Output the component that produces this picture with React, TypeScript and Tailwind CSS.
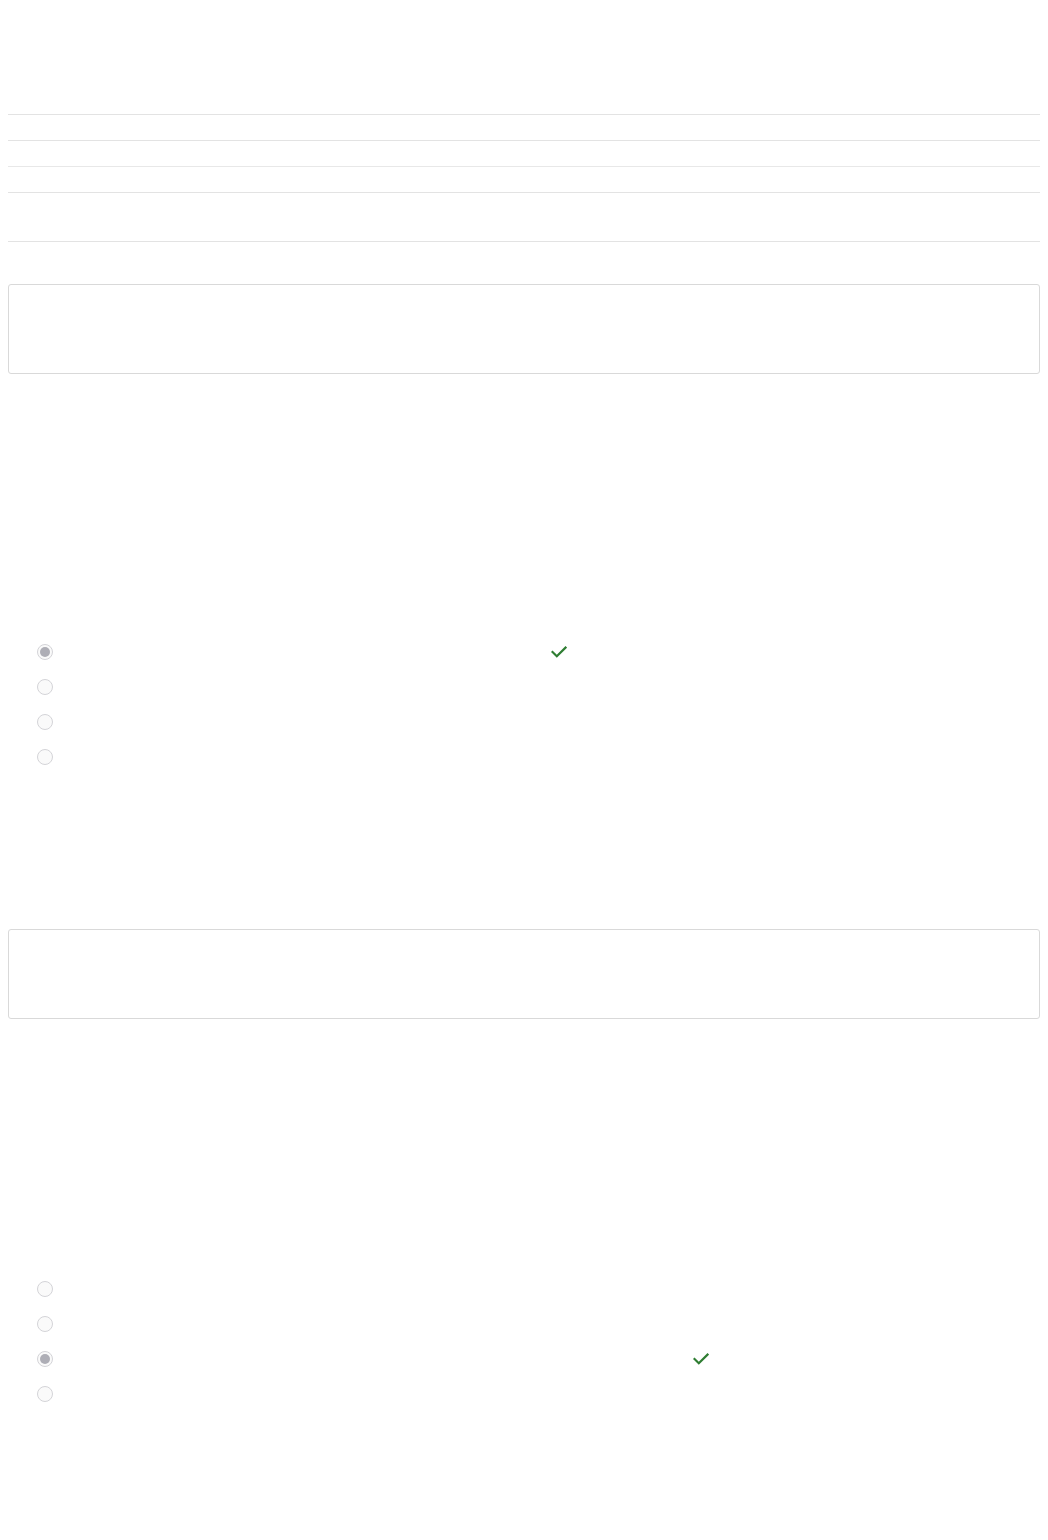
const groups = [
  { checked: 0, checkGap: 'ml-[498px]' },
  { checked: 2, checkGap: 'ml-[640px]' },
];

function Check() {
  return (
    <svg width="16" height="16" viewBox="0 0 16 16" fill="none" className="shrink-0">
      <polyline points="1.5,8 5.8,12.2 14.5,3.6" stroke="#2e7d32" strokeWidth="2.2" strokeLinecap="square" />
    </svg>
  );
}

function Radio({ on }: { on: boolean }) {
  return (
    <span className="w-4 h-4 shrink-0 rounded-full border border-[#d4d4d8] bg-[#fafafa] flex items-center justify-center">
      {on && <span className="w-[10px] h-[10px] rounded-full bg-[#aeaeb6]" />}
    </span>
  );
}

function Options({ checked, checkGap }: { checked: number; checkGap: string }) {
  return (
    <div className="flex flex-col pl-[29px]">
      {[0, 1, 2, 3].map((i) => (
        <div key={i} className="h-[35px] flex items-center">
          <Radio on={i === checked} />
          {i === checked && (
            <span className={checkGap}>
              <Check />
            </span>
          )}
        </div>
      ))}
    </div>
  );
}

function Answer() {
  return <div className="h-[90px] rounded-[3px] border border-[#d9d9d9] bg-white" />;
}

export default function App() {
  return (
    <div className="min-h-[1540px] bg-white px-2 pt-[114px] font-['Liberation_Sans',sans-serif] text-white">
      <div className="flex flex-col">
        <div className="h-[26px] border-t border-[#e3e3e3]" />
        <div className="h-[26px] border-t border-[#e3e3e3]" />
        <div className="h-[26px] border-t border-[#e8e8e8]" />
        <div className="h-[50px] border-t border-b border-[#e3e3e3]" />
      </div>
      <div className="mt-[42px]">
        <Answer />
      </div>
      <div className="mt-[260px]">
        <Options {...groups[0]} />
      </div>
      <div className="mt-[155px]">
        <Answer />
      </div>
      <div className="mt-[252px]">
        <Options {...groups[1]} />
      </div>
    </div>
  );
}
